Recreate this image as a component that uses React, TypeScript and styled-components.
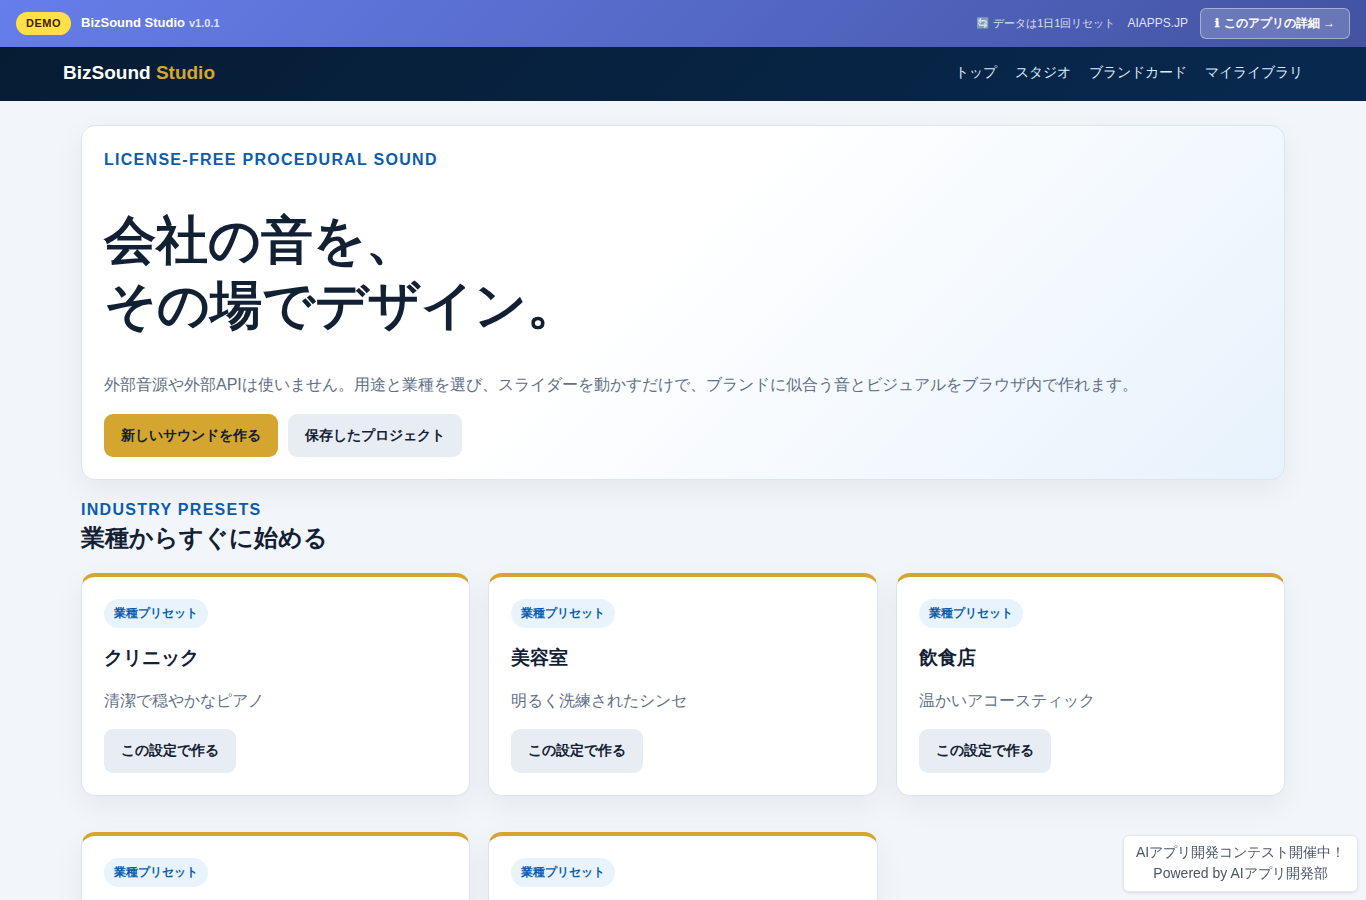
import React from "react";
import styled, { createGlobalStyle } from "styled-components";

const GlobalStyle = createGlobalStyle`
  * { box-sizing: border-box; }
  body {
    margin: 0;
    background: #f2f5fa;
    color: #122033;
    font-family: "Liberation Sans", sans-serif;
    font-size: 16px;
    line-height: 24px;
  }
`;

const DemoBar = styled.div`
  display: flex;
  align-items: center;
  justify-content: space-between;
  height: 47px;
  padding: 0 16px;
  background: linear-gradient(135deg, #667eea 0%, #4353a2 100%);
  color: #fff;
`;

const DemoGroup = styled.div<{ $gap: number }>`
  display: flex;
  align-items: center;
  gap: ${(p) => p.$gap}px;
`;

const DemoBadge = styled.span`
  padding: 4px 10px;
  border-radius: 20px;
  background: #ffe047;
  color: #422006;
  font-size: 11px;
  font-weight: 700;
  line-height: 15px;
  letter-spacing: 0.5px;
`;

const DemoTitle = styled.span`
  padding-bottom: 2px;
  font-size: 13px;
  font-weight: 700;
  line-height: 20px;
`;

const Version = styled.span`
  margin-left: 0.4px;
  font-size: 11px;
  opacity: 0.8;
`;

const ResetNote = styled.span`
  padding-bottom: 2px;
  font-size: 11px;
  opacity: 0.8;
`;

const DemoLink = styled.a`
  padding-bottom: 2px;
  font-size: 12px;
  color: rgba(255, 255, 255, 0.85);
`;

const DetailLink = styled.a`
  height: 31px;
  padding: 0 14px;
  border: 1px solid rgba(255, 255, 255, 0.4);
  border-radius: 6px;
  background: rgba(255, 255, 255, 0.2);
  font-size: 12px;
  font-weight: 700;
  line-height: 29px;
`;

const InfoGlyph = styled.span`
  margin-right: 0.7px;
  font-family: "DejaVu Sans", sans-serif;
  line-height: 1;
  -webkit-text-stroke: 0.5px #fff;
`;

const Header = styled.header`
  display: flex;
  align-items: center;
  justify-content: space-between;
  height: 54px;
  padding: 0 63px 2px;
  background: linear-gradient(135deg, #061c33, #08294f);
`;

const Brand = styled.div`
  color: #fff;
  font-size: 19px;
  font-weight: 700;

  span { color: #d4a62f; }
`;

const Nav = styled.nav`
  display: flex;
  gap: 18px;
  padding-bottom: 2px;
  color: #dbeafe;
  font-size: 14px;
`;

const Main = styled.main`
  padding: 24px 81px 0;
`;

const Panel = styled.section`
  margin-bottom: 18px;
  padding: 22px;
  border: 1px solid #dbe5ef;
  border-radius: 14px;
  background: #fff;
  box-shadow: 0 10px 30px rgba(16, 32, 41, 0.06);
`;

const Hero = styled(Panel)`
  height: 355px;
  background: linear-gradient(135deg, #fff 45%, #e7f2fc);
`;

const Eyebrow = styled.div`
  color: #0b5cad;
  font-weight: 700;
  letter-spacing: 1.28px;
`;

const HeroTitle = styled.h1`
  margin: 36px 0 35px;
  font-size: 52px;
  line-height: 65px;
`;

const Muted = styled.p`
  margin: 0 0 16px;
  color: #607086;
`;

const ButtonRow = styled.div`
  display: flex;
  gap: 10px;
  padding-top: 1px;
`;

const Button = styled.button<{ $primary?: boolean; $height?: number }>`
  height: ${(p) => p.$height ?? 43}px;
  padding: 0 17px;
  border: 0;
  border-radius: 9px;
  background: ${(p) => (p.$primary ? "#d4a62f" : "#e8edf4")};
  color: #122033;
  font-family: inherit;
  font-size: 14px;
  font-weight: 700;
`;

const SectionTitle = styled.h2`
  margin: 0 0 19px;
  font-size: 24px;
  line-height: 32px;
`;

const CardGrid = styled.div`
  display: grid;
  grid-template-columns: repeat(3, 1fr);
  gap: 18px;
`;

const Card = styled(Panel)`
  height: 223px;
  margin-bottom: 18px;
  border-top: 4px solid #d4a62f;
`;

const Tag = styled.span`
  display: block;
  width: fit-content;
  padding: 0 10px;
  border-radius: 20px;
  background: #e8f3fc;
  color: #0b5cad;
  font-size: 12px;
  font-weight: 700;
  line-height: 29px;
`;

const CardTitle = styled.h3`
  margin: 16px 0 17px;
  font-size: 19px;
  line-height: 28px;
`;

const Credit = styled.aside`
  position: fixed;
  right: 8px;
  bottom: 8px;
  width: 235px;
  height: 57px;
  padding: 6px 0;
  border: 1px solid #e5e9ef;
  border-radius: 6px;
  background: #fff;
  box-shadow: 0 1px 3px rgba(0, 0, 0, 0.1);
  color: #4a5568;
  font-size: 14px;
  line-height: 21px;
  text-align: center;
`;

const presets = [
  ["クリニック", "清潔で穏やかなピアノ"],
  ["美容室", "明るく洗練されたシンセ"],
  ["飲食店", "温かいアコースティック"],
  ["士業", "信頼感のあるストリングス"],
  ["IT企業", "先進的なデジタル"],
];

export default function App() {
  return (
    <>
      <GlobalStyle />
      <DemoBar>
        <DemoGroup $gap={10}>
          <DemoBadge>DEMO</DemoBadge>
          <DemoTitle>
            BizSound Studio <Version>v1.0.1</Version>
          </DemoTitle>
        </DemoGroup>
        <DemoGroup $gap={12}>
          <ResetNote>🔄 データは1日1回リセット</ResetNote>
          <DemoLink>AIAPPS.JP</DemoLink>
          <DetailLink>
            <InfoGlyph>ℹ</InfoGlyph> このアプリの詳細 →
          </DetailLink>
        </DemoGroup>
      </DemoBar>
      <Header>
        <Brand>
          BizSound <span>Studio</span>
        </Brand>
        <Nav>
          <a>トップ</a>
          <a>スタジオ</a>
          <a>ブランドカード</a>
          <a>マイライブラリ</a>
        </Nav>
      </Header>
      <Main>
        <Hero>
          <Eyebrow>LICENSE-FREE PROCEDURAL SOUND</Eyebrow>
          <HeroTitle>
            会社の音を、
            <br />
            その場でデザイン。
          </HeroTitle>
          <Muted>
            外部音源や外部APIは使いません。用途と業種を選び、スライダーを動かすだけで、ブランドに似合う音とビジュアルをブラウザ内で作れます。
          </Muted>
          <ButtonRow>
            <Button $primary>新しいサウンドを作る</Button>
            <Button>保存したプロジェクト</Button>
          </ButtonRow>
        </Hero>
        <Eyebrow>INDUSTRY PRESETS</Eyebrow>
        <SectionTitle>業種からすぐに始める</SectionTitle>
        <CardGrid>
          {presets.map(([name, text]) => (
            <Card key={name}>
              <Tag>業種プリセット</Tag>
              <CardTitle>{name}</CardTitle>
              <Muted>{text}</Muted>
              <Button $height={44}>この設定で作る</Button>
            </Card>
          ))}
        </CardGrid>
      </Main>
      <Credit>
        AIアプリ開発コンテスト開催中！
        <br />
        Powered by AIアプリ開発部
      </Credit>
    </>
  );
}
